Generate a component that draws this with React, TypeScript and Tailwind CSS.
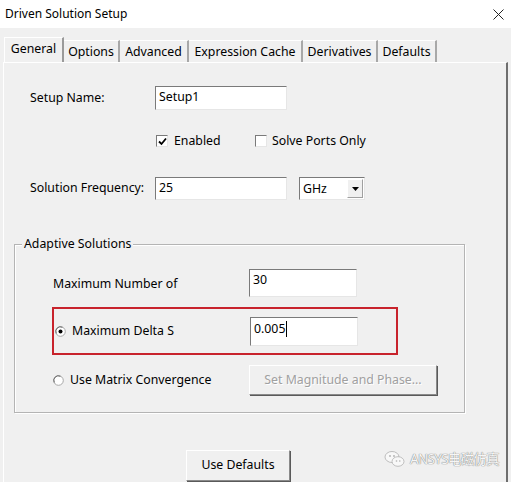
import React from "react";

const sunken =
  "bg-white border border-t-[#7a7a7a] border-l-[#7a7a7a] border-b-[#e6e6e6] border-r-[#e6e6e6]";

function Checkbox({ checked }: { checked?: boolean }) {
  return (
    <div className={`w-[12px] h-[12px] ${sunken} flex items-center justify-center`}>
      {checked && (
        <svg width="9" height="9" viewBox="0 0 9 9">
          <path d="M1 4.5 L3.5 7 L8 1.5" stroke="#000" strokeWidth="1.8" fill="none" />
        </svg>
      )}
    </div>
  );
}

function Radio({ checked }: { checked?: boolean }) {
  return (
    <svg width="11" height="11" viewBox="0 0 11 11">
      <circle cx="5.5" cy="5.5" r="4.8" fill="#fff" stroke="#a8a8a8" strokeWidth="1" />
      <path d="M1.3 7.5 A4.6 4.6 0 0 1 7.5 1.3" stroke="#6a6a6a" strokeWidth="1" fill="none" />
      {checked && <circle cx="5.5" cy="5.5" r="2" fill="#000" />}
    </svg>
  );
}

const raised =
  "bg-[#f0f0f0] border border-t-white border-l-white border-b-[#8a8a8a] border-r-[#8a8a8a] shadow-[1px_1px_0_#5a5a5a]";

export default function App() {
  const tabs: { label: string; w: string }[] = [
    { label: "Options", w: "w-[56px]" },
    { label: "Advanced", w: "w-[69px]" },
    { label: "Expression Cache", w: "w-[114px]" },
    { label: "Derivatives", w: "w-[75px]" },
    { label: "Defaults", w: "w-[59px]" },
  ];
  return (
    <div className="w-[511px] h-[482px] bg-[#f0f0f0] overflow-hidden relative font-['Noto_Sans',sans-serif] text-[12.3px] text-black flex flex-col">
      {/* title bar */}
      <div className="h-[28px] bg-white flex items-center justify-between pl-[5px] pr-[7px] shrink-0">
        <span className="text-[12px] leading-none">Driven Solution Setup</span>
        <svg width="11" height="11" viewBox="0 0 11 11">
          <path d="M0.5 0.5 L10.5 10.5 M10.5 0.5 L0.5 10.5" stroke="#222" strokeWidth="1" />
        </svg>
      </div>
      {/* tabs */}
      <div className="h-[34px] flex items-end pl-[4px] shrink-0">
        <div className="w-[60px] h-[25px] border-l border-t border-white border-r-2 border-r-[#9a9a9a] flex items-start justify-center pt-[2px] leading-[18px]">
          General
        </div>
        {tabs.map((t) => (
          <div
            key={t.label}
            className={`${t.w} h-[22px] border-t border-white border-r-2 border-r-[#a8a8a8] flex items-center justify-center leading-[18px]`}
          >
            {t.label}
          </div>
        ))}
      </div>
      {/* panel */}
      <div className="flex-1 ml-[3px] mr-[3px] border-l border-t border-white border-r-2 border-r-[#6e6e6e] flex flex-col">
        {/* setup name */}
        <div className="mt-[23px] pl-[26px] flex items-center">
          <span className="w-[125px]">Setup Name:</span>
          <div className={`w-[132px] h-[24px] ${sunken} pl-[3px] leading-[19px]`}>Setup1</div>
        </div>
        {/* checkboxes */}
        <div className="mt-[22px] ml-[152px] h-[18px] flex items-center">
          <Checkbox checked />
          <span className="ml-[6px] w-[81px]">Enabled</span>
          <Checkbox />
          <span className="ml-[5px]">Solve Ports Only</span>
        </div>
        {/* frequency */}
        <div className="mt-[27px] pl-[26px] flex items-center">
          <span className="w-[125px]">Solution Frequency:</span>
          <div className={`w-[132px] h-[23px] ${sunken} pl-[3px] leading-[19px]`}>25</div>
          <div className={`ml-[12px] w-[66px] h-[23px] ${sunken} flex items-center justify-between pl-[3px] pr-[1px]`}>
            <span className="leading-[19px]">GHz</span>
            <div className="w-[16px] h-[19px] bg-[#f0f0f0] border border-t-white border-l-white border-b-[#a0a0a0] border-r-[#a0a0a0] flex items-center justify-center">
              <svg width="7" height="4" viewBox="0 0 7 4">
                <path d="M0 0 L7 0 L3.5 4 Z" fill="#000" />
              </svg>
            </div>
          </div>
        </div>
        {/* group box */}
        <div className="relative mt-[44px] ml-[10px] w-[451px] h-[169px] border border-[#b4b4b4] shadow-[inset_1px_1px_0_#fff,1px_1px_0_#fff] flex flex-col">
          <span className="absolute left-[7px] top-[-10px] bg-[#f0f0f0] px-[2px] leading-[18px]">
            Adaptive Solutions
          </span>
          <div className="mt-[24px] pl-[38px] flex items-center">
            <span className="w-[196px] pt-[3px]">Maximum Number of</span>
            <div className={`w-[108px] h-[28px] ${sunken} pl-[3px] leading-[19px]`}>30</div>
          </div>
          <div className="mt-[10px] ml-[37px] w-[346px] h-[48px] border-2 border-[#c8232c] flex items-center pl-[1px]">
            <Radio checked />
            <span className="ml-[6px] w-[178px]">Maximum Delta S</span>
            <div className={`w-[108px] h-[29px] ${sunken} pl-[3px] leading-[22px] flex items-start`}>
              <span>0.005</span>
              <span className="ml-[1px] mt-[3px] w-[1px] h-[16px] bg-black" />
            </div>
          </div>
          <div className="mt-[10px] pl-[38px] flex items-center">
            <Radio />
            <span className="ml-[6px] w-[179px]">Use Matrix Convergence</span>
            <div className={`w-[188px] h-[30px] ${raised} flex items-center justify-center text-[#a0a0a0] [text-shadow:1px_1px_0_#fff]`}>
              Set Magnitude and Phase...
            </div>
          </div>
        </div>
        {/* use defaults */}
        <div className="mt-[37px] ml-[182px]">
          <div className={`w-[104px] h-[31px] ${raised} flex items-center justify-center`}>
            Use Defaults
          </div>
        </div>
      </div>
      {/* watermark */}
      <div className="absolute left-[384px] top-[449px] flex items-center gap-[4px] text-[13.5px] text-[#f6f6f6] [text-shadow:0_0_1px_#808080,0_0_1px_#808080]">
        <svg width="22" height="18" viewBox="0 0 22 18">
          <ellipse cx="8" cy="7" rx="7" ry="5.5" fill="#f8f8f8" stroke="#b0b0b0" strokeWidth="0.8" />
          <ellipse cx="14" cy="11.5" rx="6" ry="4.8" fill="#f8f8f8" stroke="#b0b0b0" strokeWidth="0.8" />
          <circle cx="6" cy="6" r="0.9" fill="#b0b0b0" />
          <circle cx="10" cy="6" r="0.9" fill="#b0b0b0" />
          <circle cx="12.5" cy="11" r="0.8" fill="#b0b0b0" />
          <circle cx="15.8" cy="11" r="0.8" fill="#b0b0b0" />
        </svg>
        <span className="font-['Noto_Sans','Noto_Sans_CJK_SC',sans-serif] tracking-[-0.7px]">ANSYS电磁仿真</span>
      </div>
    </div>
  );
}
